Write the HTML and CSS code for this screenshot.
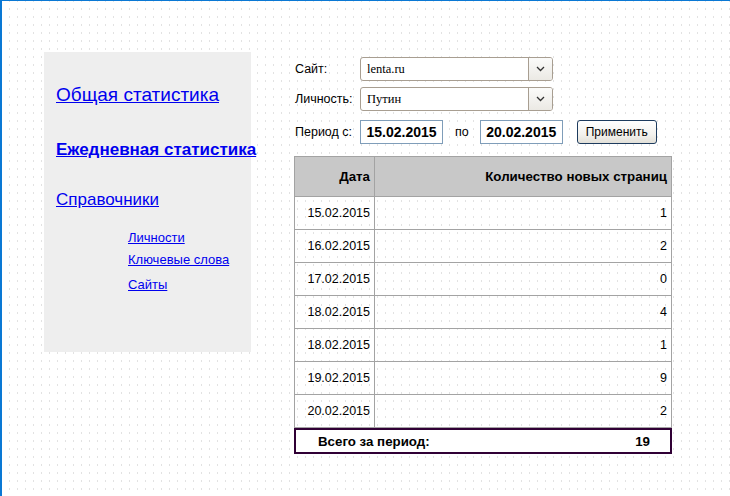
FILE: index.html
```html
<!DOCTYPE html>
<html lang="ru">
<head>
<meta charset="utf-8">
<title>Статистика</title>
<link rel="stylesheet" href="styles.css">
</head>
<body>
<div class="page">
  <nav class="sidebar">
    <a class="nav-main nav-general" href="#">Общая статистика</a>
    <a class="nav-main nav-daily" href="#">Ежедневная статистика</a>
    <a class="nav-main nav-refs" href="#">Справочники</a>
    <a class="nav-sub nav-sub1" href="#">Личности</a>
    <a class="nav-sub nav-sub2" href="#">Ключевые слова</a>
    <a class="nav-sub nav-sub3" href="#">Сайты</a>
  </nav>
  <main class="main">
    <div class="row row-site">
      <span class="label">Сайт:</span>
      <div class="select">
        <span class="select-value">lenta.ru</span>
        <span class="select-arrow"><svg width="9" height="6" viewBox="0 0 9 6"><polyline points="1,1 4.5,4.5 8,1" fill="none" stroke="#333" stroke-width="1.3"/></svg></span>
      </div>
    </div>
    <div class="row row-person">
      <span class="label">Личность:</span>
      <div class="select">
        <span class="select-value">Путин</span>
        <span class="select-arrow"><svg width="9" height="6" viewBox="0 0 9 6"><polyline points="1,1 4.5,4.5 8,1" fill="none" stroke="#333" stroke-width="1.3"/></svg></span>
      </div>
    </div>
    <div class="row row-period">
      <span class="label">Период с:</span>
      <span class="date">15.02.2015</span>
      <span class="po">по</span>
      <span class="date">20.02.2015</span>
      <button class="apply" type="button">Применить</button>
    </div>
    <table class="stats">
      <thead>
        <tr><th class="c-date">Дата</th><th class="c-count">Количество новых страниц</th></tr>
      </thead>
      <tbody>
        <tr><td>15.02.2015</td><td>1</td></tr>
        <tr><td>16.02.2015</td><td>2</td></tr>
        <tr><td>17.02.2015</td><td>0</td></tr>
        <tr><td>18.02.2015</td><td>4</td></tr>
        <tr><td>18.02.2015</td><td>1</td></tr>
        <tr><td>19.02.2015</td><td>9</td></tr>
        <tr><td>20.02.2015</td><td>2</td></tr>
      </tbody>
    </table>
    <div class="total"><span>Всего за период:</span><span>19</span></div>
  </main>
</div>
</body>
</html>
```
FILE: styles.css
```css
html {
  background-color: #ffffff;
  background-image:
    linear-gradient(to bottom, transparent 2px, #ffffff 2px),
    linear-gradient(to right, #e2e2e2 1px, transparent 1px);
  background-size: 8px 8px;
  background-position: 1px 0;
}

body {
  margin: 0;
  height: 496px;
  box-sizing: border-box;
  border-top: 1px solid #0a78d4;
  border-left: 2px solid #0a78d4;
  font-family: "Liberation Sans", Arial, sans-serif;
  color: #000;
}

.page {
  display: flex;
  align-items: flex-start;
  padding: 51px 0 0 42px;
}

.sidebar {
  width: 207px;
  height: 300px;
  box-sizing: border-box;
  background: #eeeeee;
  padding: 32px 0 0 12px;
  display: flex;
  flex-direction: column;
  align-items: flex-start;
}

.sidebar a {
  color: #0000ee;
  text-decoration: underline;
  white-space: nowrap;
}

.nav-main {
  line-height: 22px;
}

.nav-general {
  font-size: 19px;
}

.nav-daily {
  font-size: 17px;
  font-weight: bold;
  margin-top: 33px;
}

.nav-refs {
  font-size: 17px;
  margin-top: 27.5px;
}

.nav-sub {
  font-size: 13px;
  line-height: 16px;
  margin-left: 72px;
}

.nav-sub1 { margin-top: 19.5px; }
.nav-sub2 { margin-top: 5.6px; }
.nav-sub3 { margin-top: 9.7px; }

.main {
  margin-left: 43px;
  margin-top: 5px;
  display: flex;
  flex-direction: column;
}

.row {
  display: flex;
  align-items: center;
  height: 24px;
  font-size: 12.5px;
}

.row-person { margin-top: 6px; }
.row-period { margin-top: 9px; }

.label {
  width: 66px;
  padding-left: 1px;
  box-sizing: border-box;
  white-space: nowrap;
}

.select {
  width: 193px;
  height: 24px;
  box-sizing: border-box;
  border: 1px solid #a89e91;
  border-radius: 3px;
  background: #ffffff;
  display: flex;
  align-items: stretch;
}

.select-value {
  flex: 1;
  display: flex;
  align-items: center;
  padding-left: 6px;
  font-family: "Liberation Serif", "Times New Roman", serif;
  font-size: 12.5px;
}

.select-arrow {
  width: 23px;
  border-left: 1px solid #a89e91;
  border-radius: 0 2px 2px 0;
  background: linear-gradient(#fbfbfa, #ebe9e4);
  display: flex;
  align-items: center;
  justify-content: center;
}

.date {
  width: 83px;
  height: 24px;
  box-sizing: border-box;
  border: 1px solid #7f9db9;
  background: #ffffff;
  font-size: 14px;
  font-weight: bold;
  display: flex;
  align-items: center;
  justify-content: center;
}

.po {
  margin: 0 11px 0 12px;
}

.apply {
  margin-left: 14px;
  width: 80px;
  height: 24px;
  box-sizing: border-box;
  border: 1px solid #1d3b5e;
  border-radius: 3px;
  background: linear-gradient(#ffffff, #f3f2ee 60%, #e2e0d8);
  font-family: "Liberation Sans", Arial, sans-serif;
  font-size: 12px;
  color: #000;
  padding: 0;
}

.stats {
  margin-top: 12px;
  width: 378px;
  border-collapse: collapse;
  font-size: 12.5px;
}

.stats th,
.stats td {
  border: 1px solid #a3a3a3;
  text-align: right;
  padding: 0 4px 0 0;
  vertical-align: middle;
}

.stats th {
  background: #c8c8c8;
  font-weight: bold;
  font-size: 13.3px;
  height: 39px;
}

.stats td {
  height: 32px;
}

.c-date {
  width: 75px;
}

.total {
  width: 378px;
  height: 26px;
  box-sizing: border-box;
  border: 2px solid #300035;
  background: #ffffff;
  display: flex;
  align-items: center;
  justify-content: space-between;
  padding: 0 20px 0 22px;
  font-size: 13.3px;
  font-weight: bold;
}
```
